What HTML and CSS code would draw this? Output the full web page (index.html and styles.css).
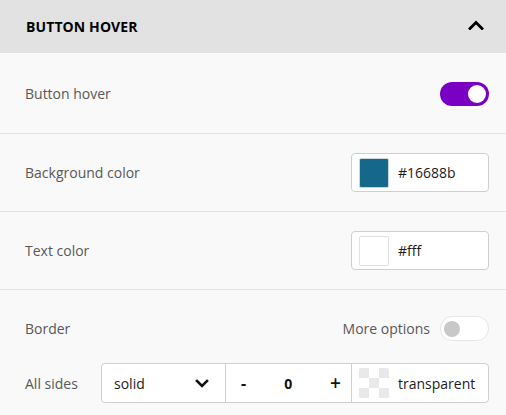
FILE: index.html
```html
<!DOCTYPE html>
<html>
<head>
<meta charset="utf-8">
<link rel="stylesheet" href="styles.css">
</head>
<body>
<div class="panel">
  <div class="header">
    <span class="title">BUTTON HOVER</span>
    <svg class="chev-up" width="16" height="10" viewBox="0 0 16 10"><path d="M2 8.5 L8 2.5 L14 8.5" fill="none" stroke="#000" stroke-width="2.8" stroke-linecap="square"/></svg>
  </div>
  <div class="row row-toggle">
    <span class="label">Button hover</span>
    <span class="toggle on"><span class="knob"></span></span>
  </div>
  <div class="row">
    <span class="label">Background color</span>
    <div class="color-input">
      <span class="swatch teal"></span>
      <span class="value">#16688b</span>
    </div>
  </div>
  <div class="row">
    <span class="label">Text color</span>
    <div class="color-input">
      <span class="swatch white"></span>
      <span class="value">#fff</span>
    </div>
  </div>
  <div class="border-section">
    <div class="border-head">
      <span class="label">Border</span>
      <div class="more">
        <span class="label">More options</span>
        <span class="toggle off"><span class="knob"></span></span>
      </div>
    </div>
    <div class="sides">
      <span class="label">All sides</span>
      <div class="group">
        <div class="select">
          <span class="value">solid</span>
          <svg width="14" height="9" viewBox="0 0 14 9"><path d="M2 2 L7 7 L12 2" fill="none" stroke="#111" stroke-width="2.6" stroke-linecap="square"/></svg>
        </div>
        <div class="number">
          <span class="op">-</span>
          <span class="num">0</span>
          <span class="op plus">+</span>
        </div>
        <div class="gcolor">
          <span class="swatch checker"></span>
          <span class="value">transparent</span>
        </div>
      </div>
    </div>
  </div>
</div>
</body>
</html>
```
FILE: styles.css
```css
html, body {
  margin: 0;
  padding: 0;
  background: #f9f9f9;
}
body {
  font-family: "Open Sans", "Noto Sans", sans-serif;
  font-size: 14px;
  color: #222;
}
.panel {
  width: 506px;
}
.header {
  height: 53px;
  background: #e2e2e2;
  display: flex;
  align-items: center;
  justify-content: space-between;
  padding: 0 22px 0 26px;
  box-sizing: border-box;
}
.title {
  font-weight: 700;
  font-size: 14px;
  color: #000;
  letter-spacing: 0.1px;
}
.chev-up {
  display: block;
  margin-top: -4px;
}
.row {
  display: flex;
  align-items: center;
  justify-content: space-between;
  height: 78px;
  padding: 0 17px 0 25px;
  box-sizing: border-box;
  border-bottom: 1px solid #e2e2e2;
}
.row-toggle {
  height: 81px;
  padding-top: 2px;
}
.row-toggle .label {
  margin-top: -2px;
}
.label {
  color: #585858;
  font-size: 14px;
}
.toggle {
  display: flex;
  align-items: center;
  width: 49px;
  height: 24px;
  border-radius: 12px;
  box-sizing: border-box;
  padding: 0 3px;
}
.toggle.on {
  background: #7a00c4;
  justify-content: flex-end;
}
.toggle.on .knob {
  width: 18px;
  height: 18px;
  border-radius: 50%;
  background: #fff;
}
.toggle.off {
  background: #fff;
  border: 1px solid #e6e6e6;
  height: 25px;
  padding: 0 3px;
}
.toggle.off .knob {
  width: 16px;
  height: 16px;
  border-radius: 50%;
  background: #c8c8c8;
}
.color-input {
  display: flex;
  align-items: center;
  width: 138px;
  height: 39px;
  box-sizing: border-box;
  border: 1px solid #cfcfcf;
  border-radius: 4px;
  background: #fff;
  padding-left: 7px;
}
.swatch {
  width: 30px;
  height: 30px;
  box-sizing: border-box;
  border-radius: 2px;
  margin-right: 9px;
  flex: none;
}
.swatch.teal {
  background: #16688b;
  border: 1px solid #c9d6dc;
}
.swatch.white {
  background: #fff;
  border: 1px solid #e0e0e0;
}
.swatch.checker {
  background-color: #fff;
  background-image: conic-gradient(#fff 25%, #e9e9e9 0 50%, #fff 0 75%, #e9e9e9 0);
  background-size: 20px 20px;
  background-position: 0 0;
}
.value {
  color: #1c1c1c;
  font-size: 14px;
}
.border-section {
  padding: 26px 17px 0 25px;
}
.border-head {
  display: flex;
  align-items: center;
  justify-content: space-between;
  height: 25px;
}
.more {
  display: flex;
  align-items: center;
  gap: 10px;
}
.sides {
  display: flex;
  align-items: center;
  justify-content: space-between;
  margin-top: 22px;
}
.group {
  display: flex;
  width: 388px;
  height: 40px;
  box-sizing: border-box;
  border: 1px solid #cfcfcf;
  border-radius: 4px;
  background: #fff;
}
.select {
  width: 124px;
  display: flex;
  align-items: center;
  justify-content: space-between;
  padding: 0 16px 0 12px;
  box-sizing: border-box;
  border-right: 1px solid #cfcfcf;
}
.select svg {
  display: block;
}
.number {
  width: 126px;
  display: flex;
  align-items: center;
  justify-content: space-between;
  padding: 0 10px 0 15px;
  box-sizing: border-box;
  border-right: 1px solid #cfcfcf;
}
.op {
  font-weight: 700;
  color: #111;
  font-size: 16px;
}
.op.plus {
  font-size: 19px;
  font-weight: 600;
}
.num {
  font-weight: 700;
  color: #111;
  font-size: 14px;
}
.gcolor {
  flex: 1;
  display: flex;
  align-items: center;
  padding-left: 7px;
}
```
